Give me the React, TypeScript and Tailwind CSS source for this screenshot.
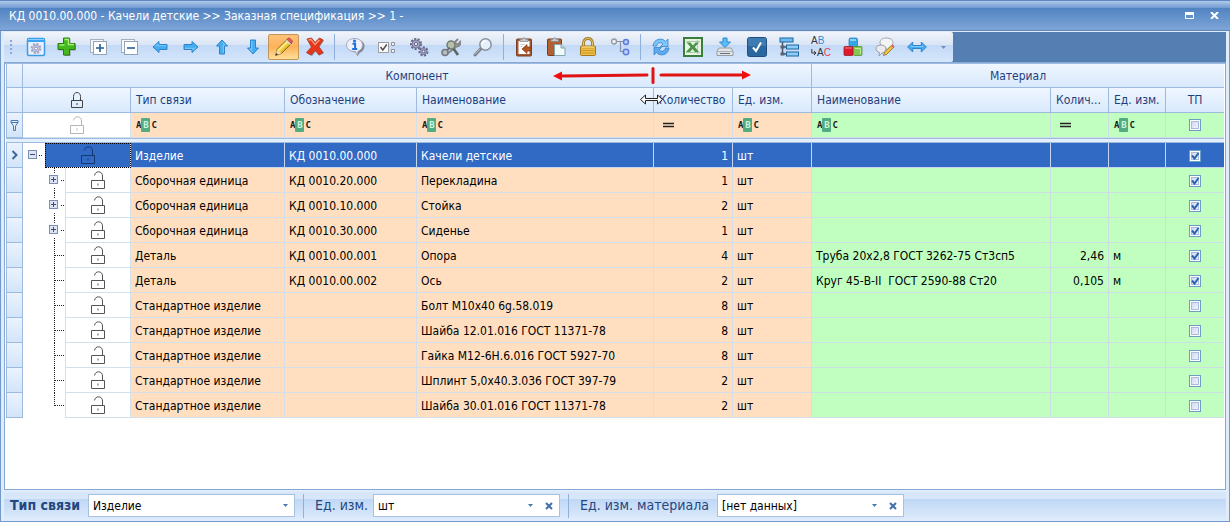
import { useState } from "react";
import type { ReactNode } from "react";
import clsx from "clsx";

interface Row {
    type: string;
    code: string;
    name: string;
    qty: string;
    material?: string;
    materialQty?: string;
    materialUnit?: string;
    node: "root" | "branch" | "leaf";
    checked: boolean;
}

const ROWS: Row[] = [
    { type: "Изделие", code: "КД 0010.00.000", name: "Качели детские", qty: "1", node: "root", checked: true },
    { type: "Сборочная единица", code: "КД 0010.20.000", name: "Перекладина", qty: "1", node: "branch", checked: true },
    { type: "Сборочная единица", code: "КД 0010.10.000", name: "Стойка", qty: "2", node: "branch", checked: true },
    { type: "Сборочная единица", code: "КД 0010.30.000", name: "Сиденье", qty: "1", node: "branch", checked: true },
    { type: "Деталь", code: "КД 0010.00.001", name: "Опора", qty: "4", material: "Труба 20х2,8 ГОСТ 3262-75 Ст3сп5", materialQty: "2,46", materialUnit: "м", node: "leaf", checked: true },
    { type: "Деталь", code: "КД 0010.00.002", name: "Ось", qty: "2", material: "Круг 45-В-II  ГОСТ 2590-88 Ст20", materialQty: "0,105", materialUnit: "м", node: "leaf", checked: true },
    { type: "Стандартное изделие", code: "", name: "Болт М10х40 6g.58.019", qty: "8", node: "leaf", checked: false },
    { type: "Стандартное изделие", code: "", name: "Шайба 12.01.016 ГОСТ 11371-78", qty: "8", node: "leaf", checked: false },
    { type: "Стандартное изделие", code: "", name: "Гайка М12-6Н.6.016 ГОСТ 5927-70", qty: "8", node: "leaf", checked: false },
    { type: "Стандартное изделие", code: "", name: "Шплинт 5,0х40.3.036 ГОСТ 397-79", qty: "2", node: "leaf", checked: false },
    { type: "Стандартное изделие", code: "", name: "Шайба 30.01.016 ГОСТ 11371-78", qty: "2", node: "leaf", checked: false },
];

/* ---------- toolbar icons ---------- */

function Icon({ children }: { children: ReactNode }) {
    return (
        <svg className="size-5" viewBox="0 0 20 20" fill="none">
            {children}
        </svg>
    );
}

function Arrow({ turn }: { turn: number }) {
    return (
        <Icon>
            <g transform={`rotate(${turn} 10 10)`}>
                <path d="M3 10l6-5.500v3h8v5H9v3z" fill="#46adf0" stroke="#2f83cc" strokeLinejoin="round" />
                <path d="M5 9.700l3-2.700v1.700h8" stroke="#8fd2fb" strokeWidth=".8" />
            </g>
        </Icon>
    );
}

function Gear({ x, y, r }: { x: number; y: number; r: number }) {
    return (
        <g>
            <circle cx={x} cy={y} r={r} stroke="#66678a" strokeWidth="2" strokeDasharray="2.2 1.3" />
            <circle cx={x} cy={y} r={r - 1} fill="#a6a8c4" stroke="#75779a" />
            <circle cx={x} cy={y} r={r / 3} fill="#e8edf7" stroke="#66678a" />
        </g>
    );
}

const Settings = () => (
    <Icon>
        <rect x="1.500" y="1.500" width="17" height="17" rx="1.500" fill="#e9f2fc" stroke="#3d9be6" strokeWidth="1.500" />
        <path d="M1 1.500h18V5H1z" fill="#3aa4f0" />
        <path d="M2 2.500h16" stroke="#8dd0ff" />
        <circle cx="10" cy="11.500" r="4.500" stroke="#a2a5c6" strokeWidth="2" strokeDasharray="2.200 1.300" />
        <circle cx="10" cy="11.500" r="3.500" fill="#c9cae0" stroke="#a2a5c6" />
        <circle cx="10" cy="11.500" r="1.500" fill="#fff" stroke="#9194b8" />
    </Icon>
);

const Add = () => (
    <Icon>
        <path d="M7.500 2h6v5.500H19v6h-5.500V19h-6v-5.500H2v-6h5.500z" fill="#555" opacity=".5" />
        <path d="M6.500 1h6v5.500H18v6h-5.500V18h-6v-5.500H1v-6h5.500z" fill="#44b81d" stroke="#227e0c" strokeLinejoin="round" />
        <path d="M7.500 2.500h4v5H17M2.500 8h5" stroke="#a4ee7a" strokeWidth="1.500" />
    </Icon>
);

function Stack({ plus }: { plus?: boolean }) {
    return (
        <Icon>
            <rect x="2.500" y="2.500" width="13" height="13" fill="#f4f8fc" stroke="#a3b1c1" />
            <rect x="5.500" y="4.500" width="13" height="13" fill="#fff" stroke="#93a2b4" />
            <path d={plus ? "M8 11h8M12 7v8" : "M8 11h8"} stroke="#235d92" strokeWidth="1.600" />
        </Icon>
    );
}

const Pencil = () => (
    <Icon>
        <path d="M1.500 18.500l1.500-6L13.500 2l4.500 4L7.500 16.500z" fill="#f4d23c" stroke="#8d6c24" strokeLinejoin="round" />
        <path d="M4 13.500L14.500 3.500" stroke="#fff19a" strokeWidth="1.500" />
        <path d="M6.500 15.800L16.800 6" stroke="#c99a1b" />
        <path d="M13 2.500l1.500-1.400c.8-.7 4.500 2.500 4 3.800L17 6.500z" fill="#e2565b" stroke="#a4483f" strokeWidth=".7" />
        <path d="M12 3.500l4.500 4" stroke="#d7dce2" strokeWidth="1.300" />
        <path d="M3 12.800l4.200 3.600-5.700 2.100z" fill="#f6dcae" />
        <path d="M1.500 18.500l.8-2.600 1.900 1.600z" fill="#333" />
    </Icon>
);

const Delete = () => (
    <Icon>
        <path d="M3 2.500l4.500-.5L11 6l4-4.500 4 2L14.500 10l4.500 6-4.500 2.500L11 14l-4 5-4.500-2.500L7 10.500z" fill="#5d3434" opacity=".55" />
        <path d="M2 2l4.500-1L10 5.500 14.500 1l3.500 2-4.500 6.500 4.500 6-4 2.500-4-5-4 5L1.500 15.500 6.500 10z" fill="#ea3518" stroke="#b5432f" strokeLinejoin="round" />
        <path d="M3.500 3l2.500-.5 4 5 4.500-4.500" stroke="#ff9a79" strokeWidth="1.300" />
    </Icon>
);

const Info = () => (
    <Icon>
        <path d="M12 2.500c4.500 0 7.500 3 7.500 6.500s-2.500 6-5 7l-2 3.500-1-4C7 15.500 4 13 4 9s3-6.500 8-6.500z" fill="#6d717c" opacity=".8" />
        <path d="M10 1.500c4.500 0 7.500 3 7.500 6.500 0 3.300-2 5.200-4.300 6l-1.200 4-1.500-3.500C5 14.500 1.500 12 1.500 8S5 1.500 10 1.500z" fill="#eeeff8" stroke="#a5a8bd" />
        <circle cx="9.500" cy="3.900" r="1.500" fill="#1b6fe0" />
        <path d="M7.500 6.800h2.600v5M7.200 12h5" stroke="#1b6fe0" strokeWidth="2" />
    </Icon>
);

const Options = () => (
    <Icon>
        <rect x="1.500" y="5.500" width="10" height="10" fill="#fafafa" stroke="#9c9ea2" />
        <path d="M3.500 10l2.300 3 4-5.500" stroke="#4d4f52" strokeWidth="1.500" />
        <path d="M14.500 5.500h3v3h-3zM14.500 12.500h3v3h-3z" fill="#f4f4f4" stroke="#8f9399" />
    </Icon>
);

const Gears = () => (
    <Icon>
        <Gear x={7} y={7} r={5} />
        <Gear x={14.5} y={14.5} r={4} />
    </Icon>
);

const Tools = () => (
    <Icon>
        <path d="M17 2l-3 3 1 2 2 .5 2-2.500c.5 3-1 4.500-3.500 4.500L6 17" stroke="#85888a" strokeWidth="2" />
        <path d="M12 11l5 7" stroke="#5f6467" strokeWidth="2.600" />
        <circle cx="10" cy="8" r="4" fill="#b6bfa9" stroke="#747b70" strokeWidth="1.500" />
        <circle cx="4" cy="15.500" r="3" fill="#b7bdc3" stroke="#74797e" strokeWidth="1.500" />
        <path d="M6.500 13l2-2.500" stroke="#666c70" strokeWidth="2" />
    </Icon>
);

const Search = () => (
    <Icon>
        <path d="M2 18l6-6.500" stroke="#777d85" strokeWidth="3" strokeLinecap="round" />
        <path d="M2 17.500l5-5.500" stroke="#c1c6cc" strokeLinecap="round" />
        <circle cx="12.500" cy="7.500" r="5.700" fill="#e4f0fb" stroke="#8a929b" strokeWidth="1.500" />
        <path d="M9 7.500c0-2 1.500-3.500 3.500-3.500" stroke="#fff" strokeWidth="1.500" />
    </Icon>
);

const Clipboard = () => (
    <Icon>
        <rect x="2.500" y="2" width="15" height="17" rx="1" fill="#a45a35" stroke="#7b3e22" />
        <path d="M4.500 4h11v13h-11z" fill="#fff" />
        <path d="M6 4.500V2.300h2L10 .5l2 1.800h2v2.200z" fill="#c5c9cf" stroke="#80858c" strokeWidth=".7" />
        <path d="M6.500 7.500h4M6.500 9.500h2" stroke="#c5ccd5" />
        <path d="M8 12l5-4.500V10h4v4h-4v2.500z" fill="#b4551f" stroke="#7c3612" strokeWidth=".7" />
    </Icon>
);

const Paste = () => (
    <Icon>
        <rect x="1.500" y="2" width="14" height="16.500" rx="1" fill="#b2602f" stroke="#7c3c1e" />
        <path d="M5 4.500V2.300h2L8.500.500l2 1.800h2v2.200z" fill="#c5c9cf" stroke="#80858c" strokeWidth=".7" />
        <path d="M8.500 7.500H15l4 3.500v7.500H8.500z" fill="#f1fafa" stroke="#84a6af" />
        <path d="M15 7.500V11h4" fill="#b9dce0" stroke="#84a6af" />
    </Icon>
);

const Padlock = () => (
    <Icon>
        <path d="M5.500 10V6c0-6 9-6 9 0v4" stroke="#a37a24" strokeWidth="2.800" />
        <path d="M5.500 10V6c0-6 9-6 9 0v4" stroke="#edc972" />
        <rect x="2.500" y="9" width="15" height="9.500" rx="1" fill="#efbe42" stroke="#a47823" />
        <path d="M3.500 11h13M3.500 13.500h13M3.500 16h13" stroke="#c9952c" />
        <path d="M4 10h12" stroke="#ffe596" />
    </Icon>
);

const Nodes = () => (
    <Icon>
        <path d="M6 4.500h8M10.500 4.500v10H14" stroke="#8793a5" strokeWidth="1.200" />
        <circle cx="4" cy="4.500" r="2.500" fill="#eef0f2" stroke="#91989f" strokeWidth="1.300" />
        <circle cx="16" cy="5" r="2.500" fill="#b9d0fa" stroke="#5f7ddd" strokeWidth="1.500" />
        <circle cx="16" cy="15" r="2.700" fill="#b9d0fa" stroke="#5f7ddd" strokeWidth="1.500" />
    </Icon>
);

const Refresh = () => (
    <Icon>
        <path d="M2 9c.5-7 9-9 12.500-4.500L17 2v7.500H9.500l2.500-2.500C9.500 4.500 6 6 5.500 9z" fill="#7cc6f8" stroke="#3684d0" strokeWidth=".8" strokeLinejoin="round" />
        <path d="M18 11c-.5 7-9 9-12.500 4.500L3 18v-7.500h7.500L8 13c2.500 2.500 6 1 6.500-2z" fill="#5caaf0" stroke="#3684d0" strokeWidth=".8" strokeLinejoin="round" />
    </Icon>
);

const Excel = () => (
    <Icon>
        <rect x="1" y="1" width="18" height="18" fill="#e9f3e5" stroke="#3b7d3b" strokeWidth="2" />
        <path d="M3 4.500h14M3 15.500h14M14.500 3v14" stroke="#a7cda2" />
        <path d="M3.500 5.500h4l2.500 3 2.500-3H16L11.800 10l4.200 5h-4L9.500 12 7 15H3l4.500-5z" fill="#4b9448" />
    </Icon>
);

const Download = () => (
    <Icon>
        <path d="M8 1h4v4h3.500L10 10.500 4.500 5H8z" fill="#5bbcf5" stroke="#2a86cf" strokeLinejoin="round" />
        <path d="M4 11h12l2 3v4.500H2V14z" fill="#e2e5e8" stroke="#969ca3" strokeLinejoin="round" />
        <path d="M2.500 14.500h15" stroke="#a9afb6" />
        <path d="M5 16.500h10" stroke="#686f77" />
    </Icon>
);

const Tick = () => (
    <Icon>
        <rect x=".5" y=".5" width="19" height="19" rx="2" fill="#2b679f" stroke="#1e4f80" />
        <path d="M1 1h18v8H1z" fill="#4784b8" opacity=".7" />
        <path d="M6 10.500l3 3.500 5-8.500" stroke="#fff" strokeWidth="2" />
    </Icon>
);

const Tree = () => (
    <Icon>
        <path d="M3.500 5v12H9M3.500 10H9" stroke="#4c5866" strokeWidth="1.500" />
        <rect x="1" y="1" width="13" height="4" fill="#6dbcf2" stroke="#1f659f" />
        <rect x="7.500" y="8" width="12" height="4" fill="#8bcdf8" stroke="#1f659f" />
        <rect x="7.500" y="15" width="12" height="4" fill="#8bcdf8" stroke="#1f659f" />
        <path d="M1.500 8.500h4v3h-4zM1.500 15.500h4v3h-4z" fill="#59636f" />
    </Icon>
);

const Replace = () => (
    <span className="flex w-5 flex-col font-['Liberation_Sans'] text-[10px] leading-3 text-[#333]">
        <span className="text-left">A<span className="text-[#2f8fd6]">B</span></span>
        <span className="flex items-center justify-end">
            <svg className="h-2 w-1.5" viewBox="0 0 6 8" fill="none">
                <path d="M.8 0v4h4M3 2l2 2-2 2" stroke="#333" />
            </svg>
            A<span className="text-[#e0404e]">C</span>
        </span>
    </span>
);

const Cubes = () => (
    <Icon>
        <rect x="6" y="1" width="8.500" height="8.500" rx="1.500" fill="#35a5e5" stroke="#1c7ab8" strokeWidth=".7" />
        <rect x="1" y="9.500" width="9" height="9" rx="1" fill="#e0182c" stroke="#941020" strokeWidth=".7" />
        <rect x="10.500" y="9.500" width="8.500" height="9" rx="1" fill="#84c850" stroke="#4b8a22" strokeWidth=".7" />
        <path d="M7 3h6" stroke="#a8e0fb" strokeWidth="1.500" />
        <path d="M2 11h7" stroke="#f2808a" />
        <path d="M12 11.500h5.500v5.500" stroke="#c2ec9c" />
    </Icon>
);

const Comment = () => (
    <Icon>
        <path d="M11 1c4.500 0 7 2 7 4.500S16 10 14 10.500L13 13l-3-2.500C7 10 5 8 5 5.500S7 1 11 1z" fill="#f3f4f6" stroke="#a3a6ac" />
        <path d="M6 8c3 0 5 1.500 5 4s-2 4-4 4l-3 3 .5-3.500C2.500 15 1 13.500 1 12c0-2.500 2-4 5-4z" fill="#e9ebee" stroke="#9b9ea5" />
        <path d="M8.500 18.500l1-3.500 7.500-7 2 2-7.500 7.500z" fill="#efc13c" stroke="#8a6b2a" strokeWidth=".8" />
        <path d="M16 8.500l1.500-1.300 2 2L18 10.800z" fill="#d9636a" />
    </Icon>
);

const Stretch = () => (
    <Icon>
        <path d="M.7 10l5-5v3.500h8.600V5l5 5-5 5v-3.500H5.700V15z" fill="#46adf0" stroke="#2f83cc" strokeLinejoin="round" />
        <path d="M4 9.500h12" stroke="#8fd2fb" strokeWidth=".8" />
    </Icon>
);

interface Tool {
    label: string;
    icon: ReactNode;
    active?: boolean;
}

const EDIT_TOOLS: Tool[] = [
    { label: "Настройки", icon: <Settings /> },
    { label: "Добавить", icon: <Add /> },
    { label: "Развернуть все", icon: <Stack plus /> },
    { label: "Свернуть все", icon: <Stack /> },
    { label: "Влево", icon: <Arrow turn={0} /> },
    { label: "Вправо", icon: <Arrow turn={180} /> },
    { label: "Вверх", icon: <Arrow turn={90} /> },
    { label: "Вниз", icon: <Arrow turn={270} /> },
    { label: "Редактировать", icon: <Pencil />, active: true },
    { label: "Удалить", icon: <Delete /> },
];

const VIEW_TOOLS: Tool[] = [
    { label: "Информация", icon: <Info /> },
    { label: "Параметры", icon: <Options /> },
    { label: "Обработка", icon: <Gears /> },
    { label: "Инструменты", icon: <Tools /> },
    { label: "Поиск", icon: <Search /> },
];

const CLIPBOARD_TOOLS: Tool[] = [
    { label: "Копировать", icon: <Clipboard /> },
    { label: "Вставить", icon: <Paste /> },
    { label: "Блокировка", icon: <Padlock /> },
    { label: "Связи", icon: <Nodes /> },
];

const DATA_TOOLS: Tool[] = [
    { label: "Обновить", icon: <Refresh /> },
    { label: "Экспорт в Excel", icon: <Excel /> },
    { label: "Загрузить", icon: <Download /> },
    { label: "Проверить", icon: <Tick /> },
    { label: "Структура", icon: <Tree /> },
    { label: "Заменить", icon: <Replace /> },
    { label: "Объекты", icon: <Cubes /> },
    { label: "Комментарий", icon: <Comment /> },
    { label: "По ширине", icon: <Stretch /> },
];

function ToolGroup({ tools, tight }: { tools: Tool[]; tight?: boolean }) {
    return (
        <div className="flex items-center">
            {tools.map((tool) => (
                <button
                    key={tool.label}
                    type="button"
                    aria-label={tool.label}
                    className={clsx(
                        "flex h-[26px] items-center justify-center",
                        tight ? "w-[31px]" : "w-8",
                        tool.active && "rounded-xs border border-[#c2955a] bg-linear-to-b from-[#fcc27a] via-[#fdb257] to-[#ffe09a]"
                    )}
                >
                    {tool.icon}
                </button>
            ))}
        </div>
    );
}

const Separator = () => <div className="mx-1 h-[26px] w-px bg-[#8fb0dc]" />;

/* ---------- grid parts ---------- */

function LockIcon({ open, className }: { open?: boolean; className: string }) {
    return (
        <svg className={clsx("h-[18px] w-[14px]", className)} viewBox="0 0 14 18" fill="none" stroke="currentColor">
            {open ? (
                <path d="M3.500 4.500C4 2 5.500.800 7.500.800 10 .800 11.500 2.500 11.500 5v4" />
            ) : (
                <path d="M3.500 9V5.500C3.500 3 5 1.500 7 1.500s3.500 1.500 3.500 4V9" />
            )}
            <path d={open ? "M.5 9.500h13v8H.5z" : "M1.500 9.500h11v7h-11z"} />
            <path d={open ? "M6 13.500h2" : "M6 13h2"} strokeWidth="2" opacity=".5" />
        </svg>
    );
}

function Check({ label, defaultChecked }: { label: string; defaultChecked?: boolean }) {
    return (
        <label className="relative mx-auto block size-3">
            <input
                type="checkbox"
                aria-label={label}
                defaultChecked={defaultChecked}
                className="peer block size-3 appearance-none border border-[#6c9fc4] bg-linear-to-br from-[#c9d4ec] to-[#f8faff] shadow-[inset_0_0_0_1px_#fff,inset_0_0_0_2px_#a9bce0]"
            />
            <svg className="pointer-events-none absolute top-0 left-0 hidden size-3 peer-checked:block" viewBox="0 0 12 12" fill="none">
                <path d="M3 5.500l2.500 3L9.500 3" stroke="#2b63b0" strokeWidth="2" />
            </svg>
        </label>
    );
}

function TextFilter({ label }: { label: string }) {
    return (
        <div className="flex h-6 items-center pl-[5px]">
            <button type="button" aria-label={`Условие: ${label}`} className="flex items-center font-['DejaVu_Sans_Mono'] text-[9px] leading-[14px] font-bold text-[#1c1c1c]">
                <span>A</span>
                <span className="w-[9px] rounded-[1px] bg-[#52ab83] text-center text-[#d3f5dc]">B</span>
                <span className="pl-px">C</span>
            </button>
            <input type="text" aria-label={label} className="min-w-0 flex-1 outline-none" />
        </div>
    );
}

function NumberFilter({ label }: { label: string }) {
    return (
        <div className="flex h-6 items-center pl-[9px]">
            <button type="button" aria-label={`Условие: ${label}`}>
                <svg className="h-1.5 w-[11px]" viewBox="0 0 11 6" stroke="#222" strokeWidth="1.500">
                    <path d="M0 1.500h11M0 4.500h11" />
                </svg>
            </button>
            <input type="text" aria-label={label} className="min-w-0 flex-1 outline-none" />
        </div>
    );
}

/* Dotted tree lines with the expand box where the row has children. */
function TreeGutter({ node, first, last }: { node: Row["node"]; first: boolean; last: boolean }) {
    const x = first ? 5 : 26;
    return (
        <svg className={clsx("h-[25px] shrink-0", first ? "w-[22px]" : "w-[42px]")} fill="none" shapeRendering="crispEdges">
            {!first && <path d={last ? "M31.500 0v13" : "M31.500 0v25"} stroke="#222" strokeDasharray="1 1" />}
            <path d={first ? "M16 12.500h4" : "M32 12.500h10"} stroke="#222" strokeDasharray="1 1" />
            {node !== "leaf" && (
                <g>
                    {!first && <path d="M25 6h12v13H25z" fill="#fff" />}
                    <rect x={x + 0.5} y="7.500" width="8" height="8" rx="1" fill="#dde5f4" stroke="#7c8cae" />
                    <path d={first ? "M7 11.500h5" : "M28 11.500h5M30.500 9v5"} stroke="#3c4d78" />
                </g>
            )}
        </svg>
    );
}

const HEAD = "border-r border-b border-[#9ebbdf] bg-linear-to-b from-[#eff6ff] to-[#d9e9fc] font-normal text-[#1e3f7f]";
const INDICATOR = "border-r border-b border-l border-[#9ebbdf] bg-linear-to-b from-[#eaf3fe] to-[#d3e5fa] p-0";
const PEACH = "border-r border-b border-[#d3dfea] bg-[#ffdfc0]";
const GREEN = "border-r border-b border-[#cbdfe4] bg-[#c0ffc0]";
const SELECTED = "border-r border-b border-[#c5d6f0] bg-[#316ac5] text-white";

function GridRow({ row, index }: { row: Row; index: number }) {
    const first = index === 0;
    const peach = clsx(first ? SELECTED : PEACH, "pt-0.5");
    const green = clsx(first ? SELECTED : GREEN, "pt-0.5");

    return (
        <tr className="h-[25px]">
            <td className={INDICATOR}>
                {first && (
                    <svg className="ml-1 h-2.5 w-2" viewBox="0 0 8 10" fill="none">
                        <path d="M1.500 1l4 4-4 4" stroke="#3f6799" strokeWidth="2" />
                    </svg>
                )}
            </td>
            <td className="p-0">
                <div className="flex h-[25px]">
                    <TreeGutter node={row.node} first={first} last={index === ROWS.length - 1} />
                    <div
                        className={clsx(
                            "flex flex-1 items-center justify-center border-r border-b border-[#d3dfea]",
                            first ? "bg-[#316ac5] outline-1 -outline-offset-1 outline-dotted outline-black" : "border-l"
                        )}
                    >
                        <LockIcon open className={first ? "text-[#17386f]" : "text-[#555]"} />
                    </div>
                </div>
            </td>
            <td className={clsx(peach, "pl-1")}>{row.type}</td>
            <td className={clsx(peach, "pl-1")}>{row.code}</td>
            <td className={clsx(peach, "pl-1")}>{row.name}</td>
            <td className={clsx(peach, "pr-1 text-right")}>{row.qty}</td>
            <td className={clsx(peach, "pl-1")}>шт</td>
            <td className={clsx(green, "pl-1 whitespace-pre")}>{row.material}</td>
            <td className={clsx(green, "pr-1 text-right")}>{row.materialQty}</td>
            <td className={clsx(green, "pl-1")}>{row.materialUnit}</td>
            <td className={clsx(green, "border-r-0")}>
                <Check label={`ТП: ${row.name}`} defaultChecked={row.checked} />
            </td>
        </tr>
    );
}

/* Arrows and resize cursor over the boundary between the name and quantity columns. */
function ResizeHint() {
    return (
        <svg className="pointer-events-none absolute top-0 right-10 z-10 h-11 w-60" viewBox="0 0 240 44" fill="none">
            <g stroke="#e01414" strokeWidth="3" strokeLinecap="round">
                <path d="M30 12l86-1M130 11h82" />
                <path d="M122 4.500v14" />
            </g>
            <path d="M22 12l9-4.500v9zM220 11l-9-4.500v9z" fill="#f20d0d" />
            <path d="M109.500 35.500l5-4.500v3.500h12V31l5 4.500-5 4.500v-3.500h-12V40z" fill="#fff" stroke="#222" strokeLinejoin="round" />
        </svg>
    );
}

function Grid() {
    return (
        <table className="w-full table-fixed border-separate border-spacing-0 text-[12px] leading-4 whitespace-nowrap text-black">
            <colgroup>
                <col className="w-[17px]" />
                <col className="w-[108px]" />
                <col className="w-[154px]" />
                <col className="w-[132px]" />
                <col className="w-[237px]" />
                <col className="w-[79px]" />
                <col className="w-[79px]" />
                <col />
                <col className="w-[58px]" />
                <col className="w-[57px]" />
                <col className="w-[58px]" />
            </colgroup>
            <thead>
                <tr className="h-6">
                    <th className={clsx(HEAD, "border-l")} />
                    <th colSpan={6} className={clsx(HEAD, "relative")}>
                        Компонент
                        <ResizeHint />
                    </th>
                    <th colSpan={4} className={clsx(HEAD, "border-r-0")}>Материал</th>
                </tr>
                <tr className="h-[25px] text-left">
                    <th className={clsx(HEAD, "border-l")} />
                    <th className={HEAD} aria-label="Блокировка">
                        <LockIcon className="mx-auto text-[#444]" />
                    </th>
                    <th className={clsx(HEAD, "pl-[5px]")}>Тип связи</th>
                    <th className={clsx(HEAD, "pl-[5px]")}>Обозначение</th>
                    <th className={clsx(HEAD, "pl-[5px]")}>Наименование</th>
                    <th className={clsx(HEAD, "pl-[5px]")}>Количество</th>
                    <th className={clsx(HEAD, "pl-[5px]")}>Ед. изм.</th>
                    <th className={clsx(HEAD, "pl-[5px]")}>Наименование</th>
                    <th className={clsx(HEAD, "pl-[5px]")}>Колич...</th>
                    <th className={clsx(HEAD, "pl-[5px]")}>Ед. изм.</th>
                    <th className={clsx(HEAD, "border-r-0 text-center")}>ТП</th>
                </tr>
                <tr className="h-[25px]">
                    <td className={INDICATOR}>
                        <svg className="mx-auto h-[11px] w-[9px]" viewBox="0 0 9 11" fill="none" stroke="#4d78ae">
                            <path d="M1 .5h7v2L5.500 6v4.500h-2V6L1 2.500zM1 2.500h7" />
                        </svg>
                    </td>
                    <td className="border-r border-b border-[#d3dfea] p-0">
                        <LockIcon open className="mx-auto text-[#b5b5b5]" />
                    </td>
                    <td className={clsx(PEACH, "p-0")}><TextFilter label="Тип связи" /></td>
                    <td className={clsx(PEACH, "p-0")}><TextFilter label="Обозначение" /></td>
                    <td className={clsx(PEACH, "p-0")}><TextFilter label="Наименование" /></td>
                    <td className={clsx(PEACH, "p-0")}><NumberFilter label="Количество" /></td>
                    <td className={clsx(PEACH, "p-0")}><TextFilter label="Ед. изм." /></td>
                    <td className={clsx(GREEN, "p-0")}><TextFilter label="Наименование материала" /></td>
                    <td className={clsx(GREEN, "p-0")}><NumberFilter label="Количество материала" /></td>
                    <td className={clsx(GREEN, "p-0")}><TextFilter label="Ед. изм. материала" /></td>
                    <td className={clsx(GREEN, "border-r-0 p-0")}><Check label="Фильтр ТП" /></td>
                </tr>
                <tr className="h-[5px]">
                    <td colSpan={11} className="border-y border-[#9ebbdf] bg-[#e3effc] p-0" />
                </tr>
            </thead>
            <tbody>
                {ROWS.map((row, index) => (
                    <GridRow key={index} row={row} index={index} />
                ))}
            </tbody>
        </table>
    );
}

/* ---------- footer ---------- */

interface ComboProps {
    id: string;
    options: string[];
    width: string;
    clearable?: boolean;
}

function Combo({ id, options, width, clearable }: ComboProps) {
    const [value, setValue] = useState(options[0]);

    return (
        <div className={clsx("relative h-[23px] border border-[#a9c0de] bg-white", width)}>
            <select
                id={id}
                value={value}
                onChange={(e) => setValue(e.target.value)}
                className="block h-full w-full appearance-none pl-1 text-[12px] text-black outline-none"
            >
                {options.map((option) => (
                    <option key={option}>{option}</option>
                ))}
            </select>
            <svg className={clsx("pointer-events-none absolute top-[9px] h-[3px] w-[5px]", clearable ? "right-[26px]" : "right-1.5")} viewBox="0 0 5 3">
                <path d="M0 0h5L2.500 3z" fill="#4b76ad" />
            </svg>
            {clearable && (
                <button type="button" aria-label="Очистить" onClick={() => setValue(options[0])} className="absolute inset-y-0 right-1.5 flex items-center">
                    <svg className="size-2" viewBox="0 0 8 8">
                        <path d="M1 1l6 6M7 1L1 7" stroke="#416fa9" strokeWidth="2" />
                    </svg>
                </button>
            )}
        </div>
    );
}

const FooterSeparator = () => <div className="mr-[11px] ml-2 h-6 w-px bg-[#8fb0dc]" />;

export default function App() {
    return (
        <div className="flex min-h-screen flex-col border border-[#7398cc] bg-[#dfecfb] font-['DejaVu_Sans_Condensed','Noto_Sans',sans-serif]">
            <header className="-mx-px -mt-px flex h-[31px] items-center justify-between border-t border-b border-t-[#5e88c2] border-b-[#5f86bb] bg-[linear-gradient(#b0caec,#6f9ad1_7px,#5183c1_7px,#7ea5d8)] pr-[11px] pl-[9px] text-white">
                <h1 className="text-[12px] leading-4">КД 0010.00.000 - Качели детские &gt;&gt; Заказная спецификация &gt;&gt; 1 -</h1>
                <div className="flex gap-4">
                    <button type="button" aria-label="Развернуть">
                        <svg className="h-[7px] w-[9px]" viewBox="0 0 9 7" fill="none">
                            <path d="M.5 1.500h8v5h-8z" stroke="#fff" />
                            <path d="M0 0h9v3H0z" fill="#fff" />
                        </svg>
                    </button>
                    <button type="button" aria-label="Закрыть">
                        <svg className="h-[7px] w-[9px]" viewBox="0 0 9 7">
                            <path d="M1 0l7 7M8 0L1 7" stroke="#fff" strokeWidth="2" />
                        </svg>
                    </button>
                </div>
            </header>

            <div className="mx-[3px] mt-px flex flex-1 flex-col">
                <div className="flex bg-[#557eb3]">
                    <div role="toolbar" aria-label="Действия" className="flex h-[30px] items-center rounded-r-xs bg-[linear-gradient(#f1f4fa,#d8e4f5_45%,#c3d9f6_45%,#d6e7fc)] pl-1.5">
                        <div className="mr-2 flex w-[2px] flex-col gap-0.5">
                            <i className="size-[2px] bg-[#8aa8d4]" />
                            <i className="size-[2px] bg-[#8aa8d4]" />
                            <i className="size-[2px] bg-[#8aa8d4]" />
                            <i className="size-[2px] bg-[#8aa8d4]" />
                        </div>
                        <ToolGroup tools={EDIT_TOOLS} tight />
                        <Separator />
                        <ToolGroup tools={VIEW_TOOLS} />
                        <Separator />
                        <ToolGroup tools={CLIPBOARD_TOOLS} />
                        <Separator />
                        <ToolGroup tools={DATA_TOOLS} />
                        <button type="button" aria-label="Другие кнопки" className="flex h-full w-5 items-center justify-center">
                            <svg className="h-[3px] w-[5px]" viewBox="0 0 5 3">
                                <path d="M0 0h5L2.500 3z" fill="#7190bd" />
                            </svg>
                        </button>
                    </div>
                </div>

                <main className="flex-1 border border-[#86a8d4] bg-white">
                    <div className="border-t border-[#9ebbdf] px-px">
                        <Grid />
                    </div>
                </main>

                <footer className="my-[2px] flex h-[27px] items-center bg-[linear-gradient(#d7e6f9_25%,#bfd7f5_25%,#dceafb)] pl-[6px] text-[#23477f]">
                    <label htmlFor="link-type" className="w-[78px] text-[14px] font-bold whitespace-nowrap">Тип связи</label>
                    <Combo id="link-type" options={["Изделие", "Сборочная единица", "Деталь", "Стандартное изделие"]} width="w-[207px]" />
                    <FooterSeparator />
                    <label htmlFor="unit" className="w-[58px] text-[14px] whitespace-nowrap">Ед. изм.</label>
                    <Combo id="unit" options={["шт", "м", "кг"]} width="w-[187px]" clearable />
                    <FooterSeparator />
                    <label htmlFor="material-unit" className="w-[137px] text-[14px] whitespace-nowrap">Ед. изм. материала</label>
                    <Combo id="material-unit" options={["[нет данных]", "м", "кг"]} width="w-[187px]" clearable />
                </footer>
            </div>
        </div>
    );
}
